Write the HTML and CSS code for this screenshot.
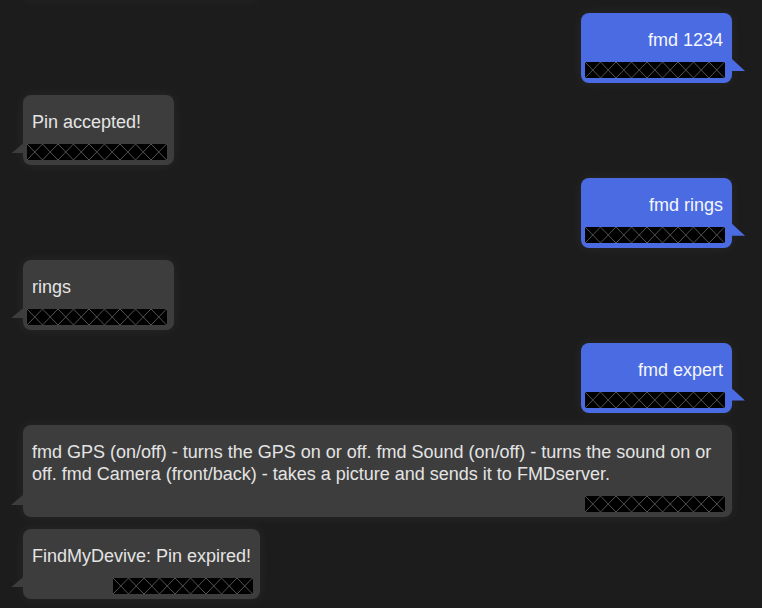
FILE: index.html
```html
<!DOCTYPE html>
<html lang="en">
<head>
<meta charset="utf-8">
<title>FMD chat</title>
<link rel="stylesheet" href="styles.css">
</head>
<body>
<div class="chat">
  <div class="msg in ghost" aria-hidden="true"></div>
  <div class="msg out"><p class="text">fmd 1234</p><span class="stamp"></span></div>
  <div class="msg in"><p class="text">Pin accepted!</p><span class="stamp"></span></div>
  <div class="msg out"><p class="text">fmd rings</p><span class="stamp"></span></div>
  <div class="msg in"><p class="text">rings</p><span class="stamp"></span></div>
  <div class="msg out"><p class="text">fmd expert</p><span class="stamp"></span></div>
  <div class="msg in"><p class="text">fmd GPS (on/off) - turns the GPS on or off. fmd Sound (on/off) - turns the sound on or off. fmd Camera (front/back) - takes a picture and sends it to FMDserver.</p><span class="stamp"></span></div>
  <div class="msg in"><p class="text">FindMyDevive: Pin expired!</p><span class="stamp"></span></div>
</div>
</body>
</html>
```
FILE: styles.css
```css
html, body {
  margin: 0;
  padding: 0;
  background: #1c1c1c;
  overflow: hidden;
}

body {
  width: 762px;
  height: 608px;
  font-family: "Liberation Sans", Arial, Helvetica, sans-serif;
}

.chat {
  display: flex;
  flex-direction: column;
  gap: 12.4px;
  padding: 13px 30px 0 23px;
}

.msg {
  position: relative;
  box-sizing: border-box;
  max-width: 709px;
  display: flex;
  flex-direction: column;
  padding: 16px 9px 5px 9px;
  border-radius: 8px;
  box-shadow: 0 0 12px 2px rgba(255, 255, 255, 0.045);
}

.ghost {
  width: 236px;
  height: 70px;
  margin-top: -84px;
  margin-bottom: 1.6px;
}

.msg.in {
  align-self: flex-start;
  background: #3d3d3d;
  color: #e4e4e4;
}

.msg.out {
  align-self: flex-end;
  background: #4a6be1;
  color: #f4f6ff;
  text-align: right;
}

.msg::before {
  content: "";
  position: absolute;
  bottom: 12px;
  width: 12px;
  height: 10px;
}

.msg.in::before {
  left: -12px;
  background: #3d3d3d;
  clip-path: polygon(100% 0, 100% 100%, 0 100%);
}

.msg.out::before {
  right: -13px;
  width: 13px;
  height: 12px;
  background: #4a6be1;
  clip-path: polygon(0 0, 100% 100%, 0 100%);
}

.text {
  margin: 0;
  font-size: 18px;
  line-height: 22px;
}

.stamp {
  display: block;
  align-self: flex-end;
  width: 140px;
  height: 16px;
  margin: 11px -2px 0 -5px;
  background-color: #000;
  background-image:
    linear-gradient(to top right, transparent calc(50% - 0.7px), #555 50%, transparent calc(50% + 0.7px)),
    linear-gradient(to bottom right, transparent calc(50% - 0.7px), #555 50%, transparent calc(50% + 0.7px));
  background-size: 15.5px 16px;
}
```
